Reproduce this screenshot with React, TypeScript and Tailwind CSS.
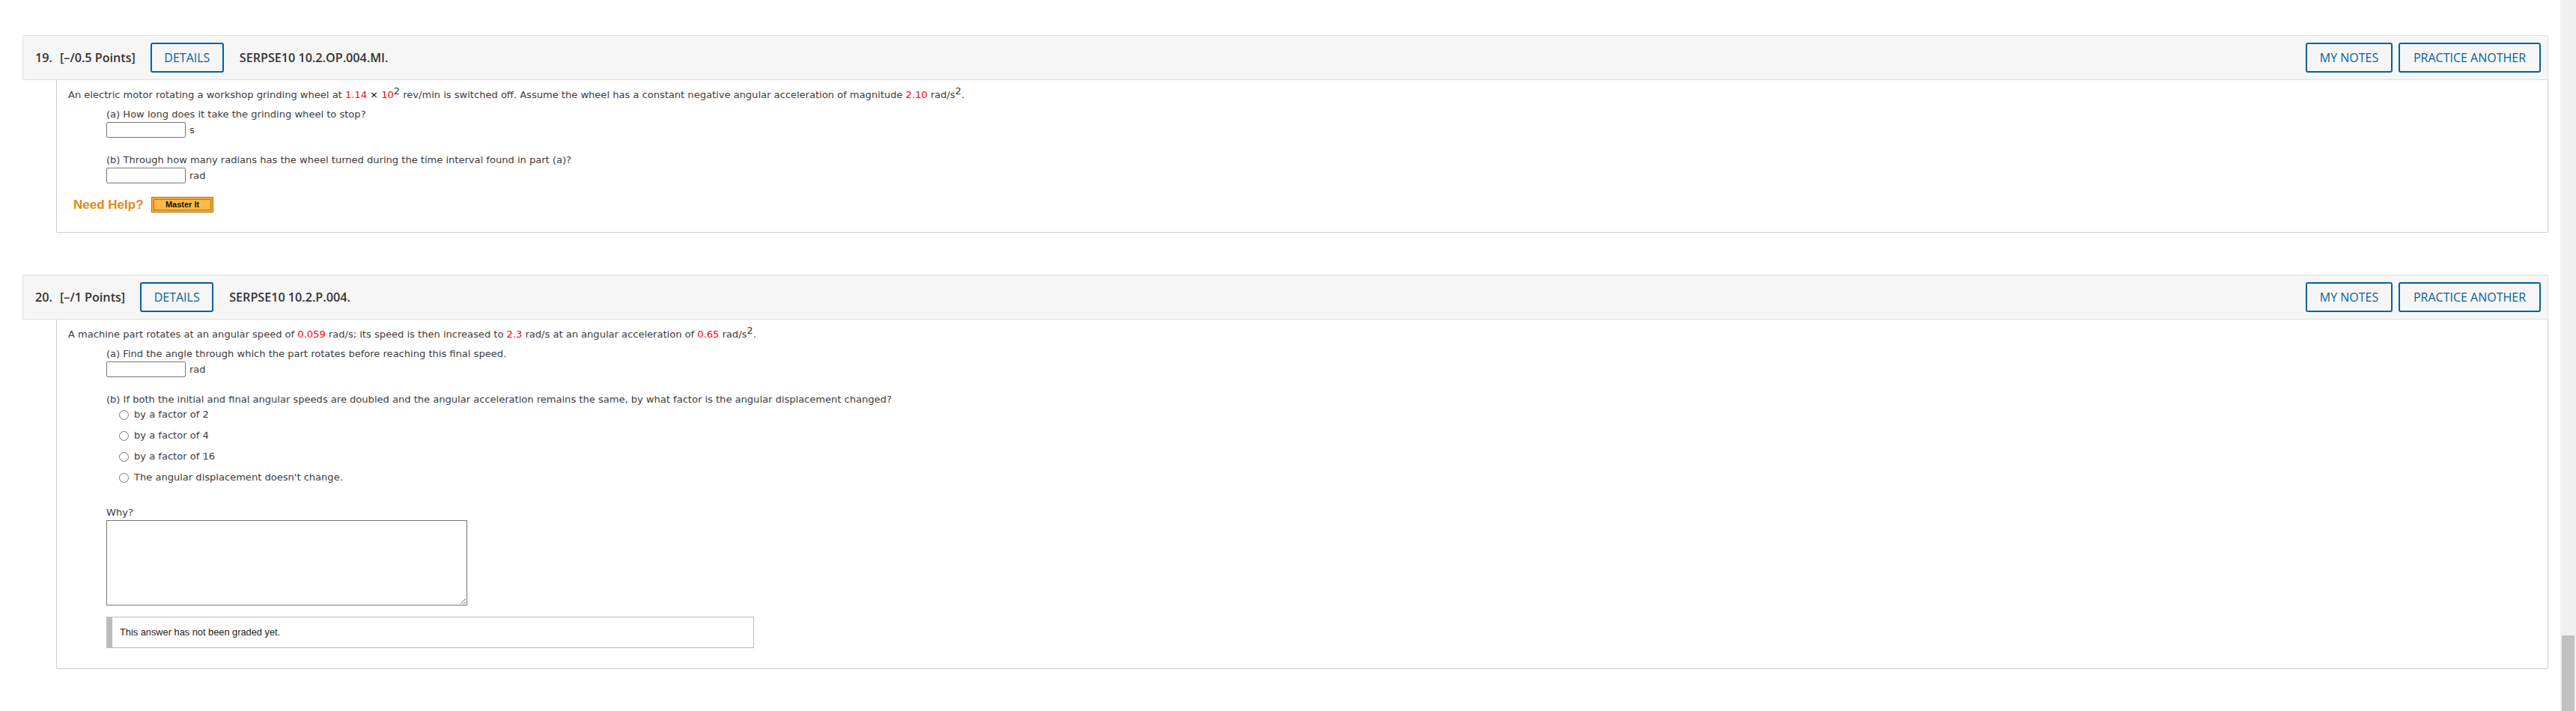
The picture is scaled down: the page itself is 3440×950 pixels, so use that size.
import React from "react";

function OutlineButton({ children, className = "" }: { children: React.ReactNode; className?: string }) {
  return (
    <button className={`h-10 rounded-[3px] border-2 border-[#00639f] bg-[#f6f6f6] text-[16px] leading-none text-[#00639f] font-['Open_Sans',sans-serif] ${className}`}>
      {children}
    </button>
  );
}

function Header({ num, points, code }: { num: string; points: string; code: string }) {
  return (
    <div className="flex h-[60px] items-center rounded-t-[2px] border border-[#e0e0e0] bg-[#f6f6f6] pl-[16px] pr-[9px] font-['Open_Sans',sans-serif] text-[16.15px] text-[#333333]">
      <span className="w-[33px] font-semibold">{num}</span>
      <span className="mr-[20px] font-semibold">{points}</span>
      <OutlineButton className="w-[98px]">DETAILS</OutlineButton>
      <span className="ml-[21px] font-semibold">{code}</span>
      <div className="ml-auto flex gap-[8px]">
        <OutlineButton className="w-[116px]">MY NOTES</OutlineButton>
        <OutlineButton className="w-[190px]">PRACTICE ANOTHER</OutlineButton>
      </div>
    </div>
  );
}

function Red({ children }: { children: React.ReactNode }) {
  return <span className="text-[#ff0000]">{children}</span>;
}

function Sup({ children }: { children: React.ReactNode }) {
  return <span className="relative top-[-5px] text-[13px] leading-none">{children}</span>;
}

function AnswerInput({ unit }: { unit: string }) {
  return (
    <div className="flex h-[21px] items-center">
      <input type="text" aria-label={unit} className="h-[21px] w-[106px] rounded-[2px] border border-[#767676] bg-white" />
      <span className="ml-[5px] leading-[20px]">{unit}</span>
    </div>
  );
}

function Radio({ label }: { label: string }) {
  return (
    <label className="flex h-[20px] items-center pl-[17px]">
      <input type="radio" name="q20b" className="m-0 h-[13px] w-[13px] shrink-0" />
      <span className="ml-[7px]">{label}</span>
    </label>
  );
}

const bodyBase =
  "ml-[45px] rounded-b-[2px] border-x border-b border-[#cccccc] pl-[15px] font-['DejaVu_Sans',sans-serif] text-[13.05px] leading-[20px] text-[#3c3c3c]";

export default function App() {
  return (
    <div className="flex h-[950px] overflow-hidden bg-white">
      <main className="min-w-0 flex-1 pl-[30px] pr-[16px] pt-[47px]">
        <section>
          <Header num="19." points="[–/0.5 Points]" code="SERPSE10 10.2.OP.004.MI." />
          <div className={`${bodyBase} pb-[26px] pt-[10px]`}>
            <p className="whitespace-nowrap">
              An electric motor rotating a workshop grinding wheel at <Red>1.14</Red>{" "}
              <span className="text-black">×</span> <Red>10</Red>
              <Sup>2</Sup> rev/min is switched off. Assume the wheel has a constant negative angular acceleration of
              magnitude <Red>2.10</Red> rad/s<Sup>2</Sup>.
            </p>
            <div className="mt-[6px] pl-[51px]">
              <p>(a) How long does it take the grinding wheel to stop?</p>
              <AnswerInput unit="s" />
              <p className="mt-[20px]">(b) Through how many radians has the wheel turned during the time interval found in part (a)?</p>
              <AnswerInput unit="rad" />
            </div>
            <div className="mt-[18px] flex h-[21px] items-center pl-[7px]">
              <span className="w-[104px] font-['Liberation_Sans',sans-serif] text-[17px] font-bold text-[#ea8511]">Need Help?</span>
              <div className="flex h-[21px] w-[83px] items-center justify-center border border-[#b8741f] bg-[#f5a73c] p-[2px]">
                <button className="h-full w-full border border-[#b8741f] bg-[#ffbb44] font-['Liberation_Sans',sans-serif] text-[11px] font-bold leading-none text-[#111111]">
                  Master It
                </button>
              </div>
            </div>
          </div>
        </section>

        <section className="mt-[56px]">
          <Header num="20." points="[–/1 Points]" code="SERPSE10 10.2.P.004." />
          <div className={`${bodyBase} pb-[27px] pt-[10px]`}>
            <p className="whitespace-nowrap">
              A machine part rotates at an angular speed of <Red>0.059</Red> rad/s; its speed is then increased to{" "}
              <Red>2.3</Red> rad/s at an angular acceleration of <Red>0.65</Red> rad/s<Sup>2</Sup>.
            </p>
            <div className="mt-[6px] pl-[51px]">
              <p>(a) Find the angle through which the part rotates before reaching this final speed.</p>
              <AnswerInput unit="rad" />
              <p className="mt-[20px]">
                (b) If both the initial and final angular speeds are doubled and the angular acceleration remains the same, by what factor is the angular displacement changed?
              </p>
              <div className="flex flex-col gap-[8px]">
                <Radio label="by a factor of 2" />
                <Radio label="by a factor of 4" />
                <Radio label="by a factor of 16" />
                <Radio label="The angular displacement doesn't change." />
              </div>
              <p className="mt-[27px]">Why?</p>
              <textarea
                aria-label="Why?"
                className="block h-[114px] w-[482px] rounded-none border border-[#767676] bg-white"
              />
              <div className="mt-[15px] flex h-[42px] w-[865px] items-center border border-l-[8px] border-[#bbbbbb] pl-[10px] font-['Liberation_Sans',sans-serif] text-[12.8px] text-[#222222]">
                This answer has not been graded yet.
              </div>
            </div>
          </div>
        </section>
      </main>
      <aside className="w-[21px] shrink-0 bg-[#f0f0f0] px-[2px] pt-[849px]">
        <div className="h-[101px] bg-[#c1c1c1]" />
      </aside>
    </div>
  );
}
